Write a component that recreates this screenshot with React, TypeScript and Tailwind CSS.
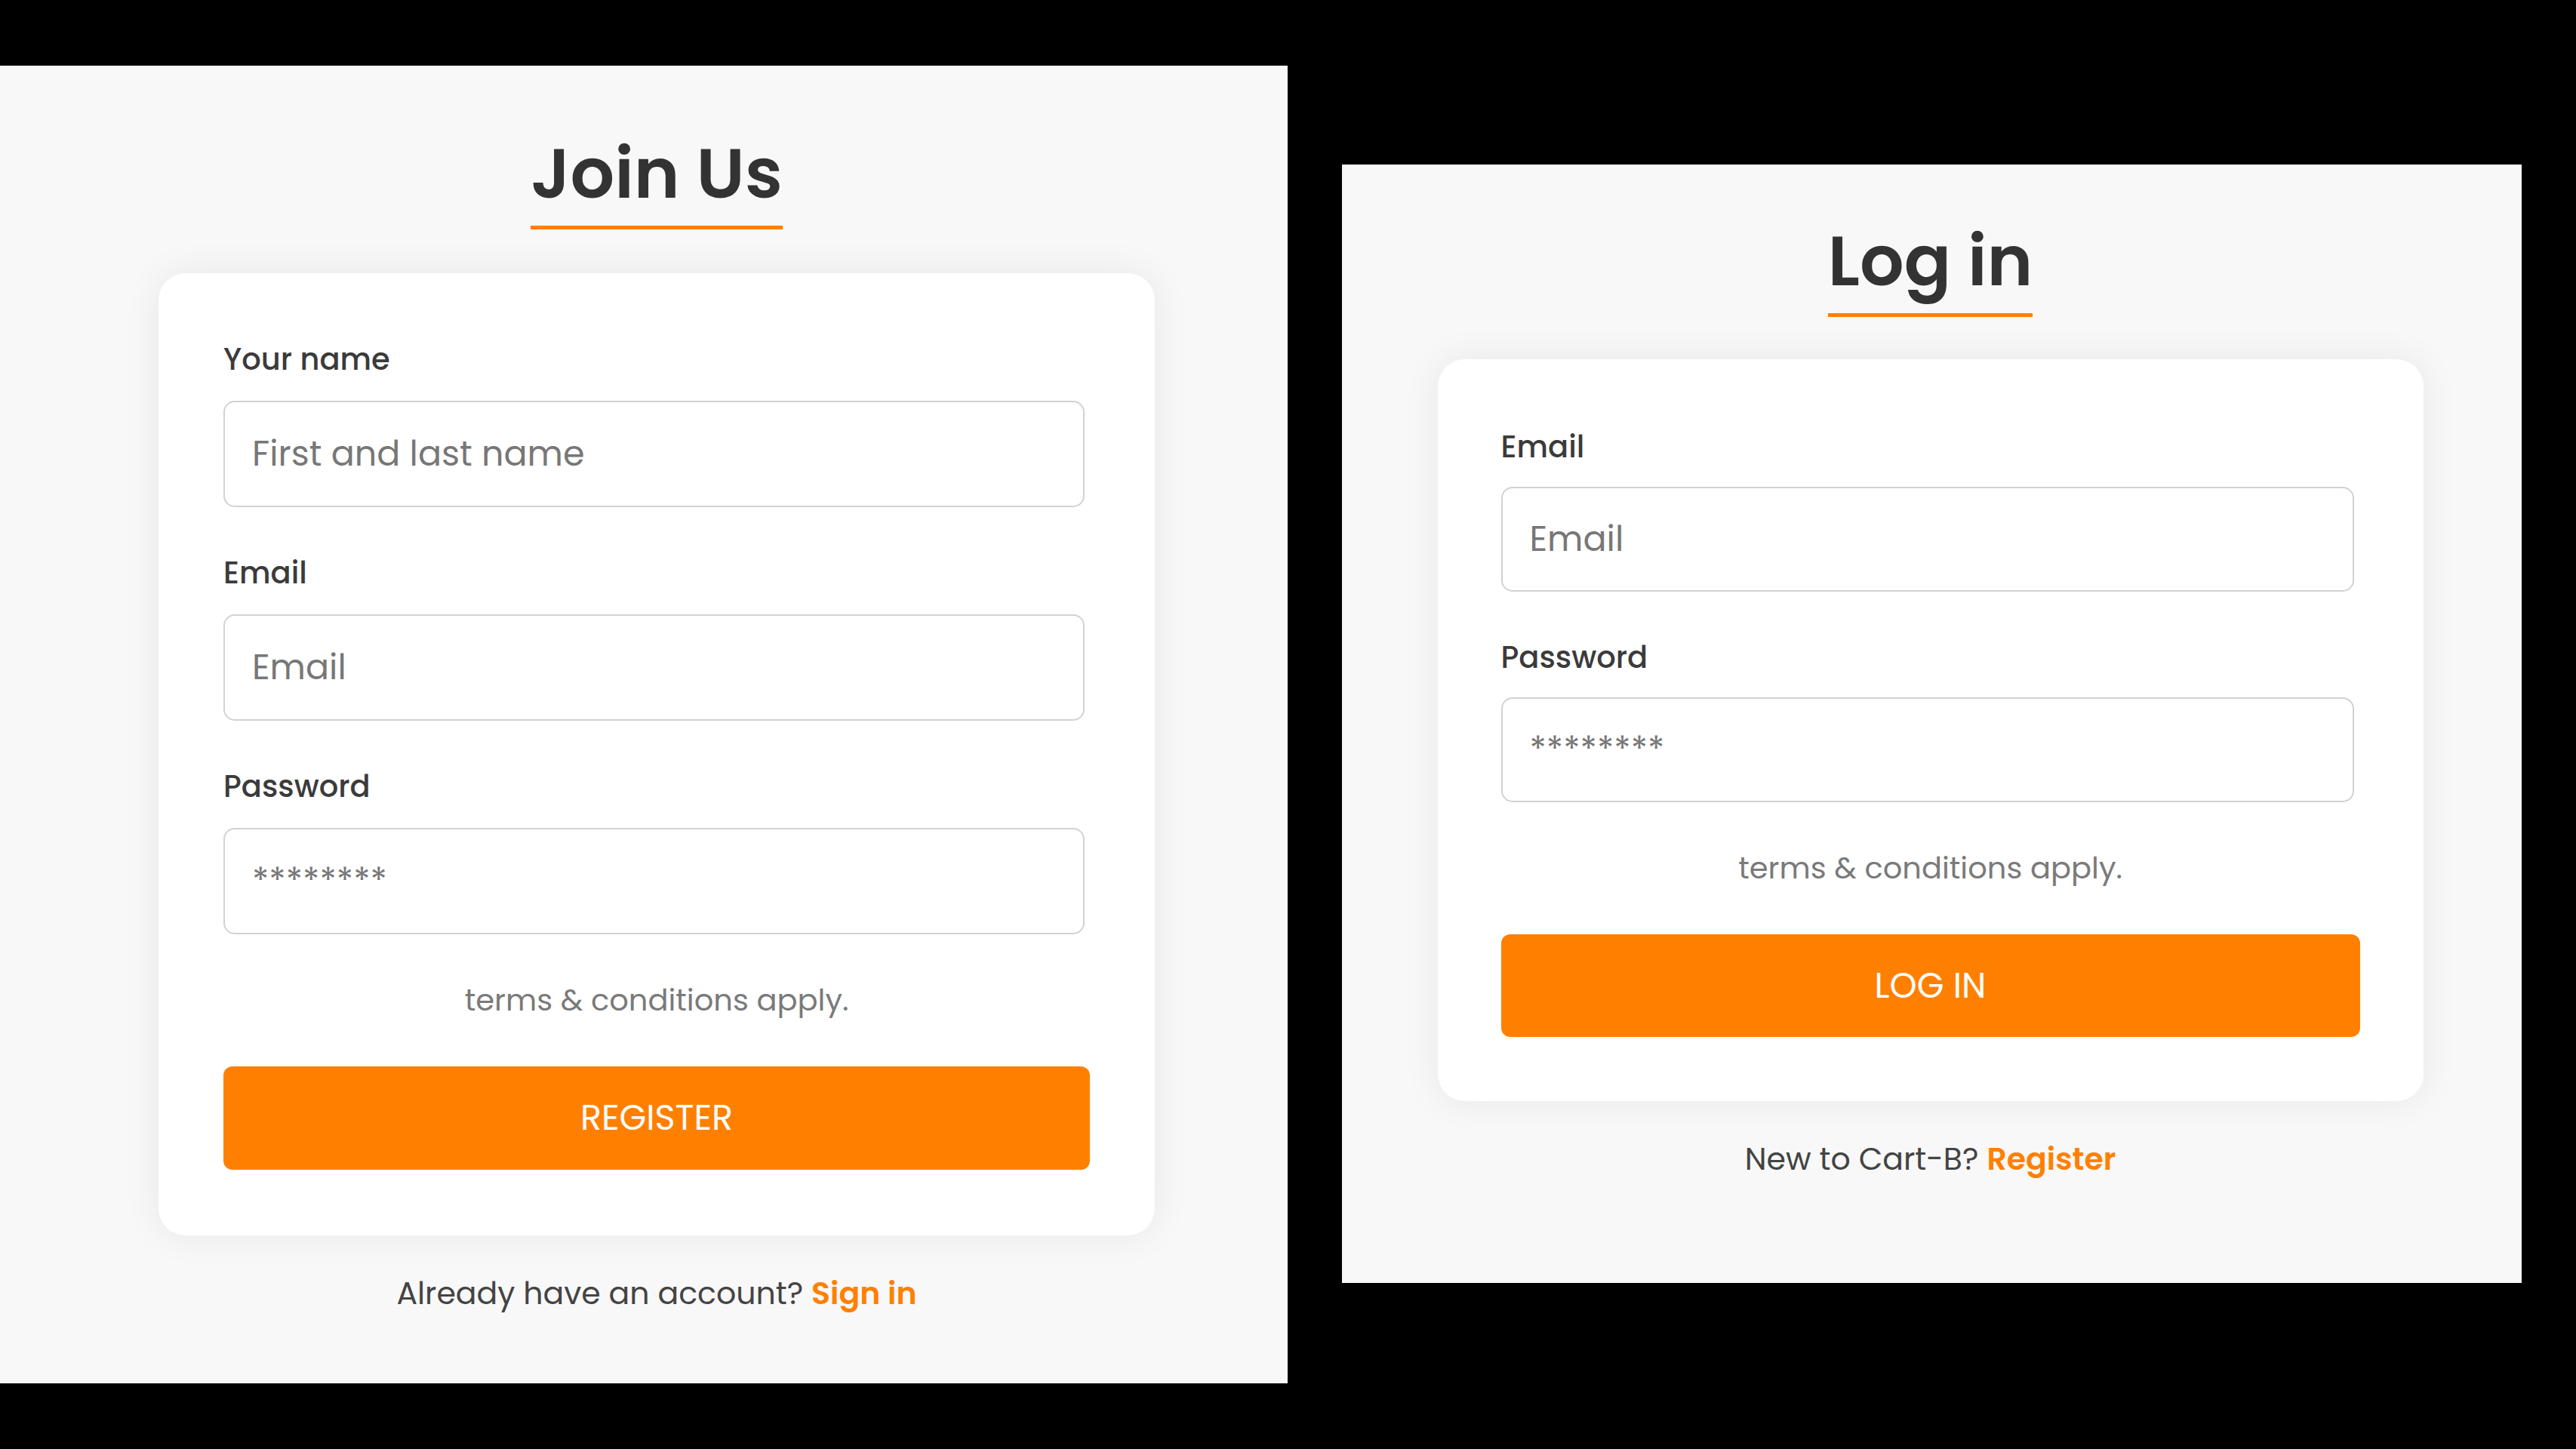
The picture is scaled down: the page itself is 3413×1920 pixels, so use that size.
type Field = { label: string; placeholder: string; type?: string };

type PanelProps = {
  title: string;
  fields: Field[];
  button: string;
  question: string;
  link: string;
  cardClass: string;
  inputClass: string;
  buttonClass: string;
};

function AuthPanel({ title, fields, button, question, link, cardClass, inputClass, buttonClass }: PanelProps) {
  return (
    <>
      <h1 className="inline-block border-b-[5px] border-[#ff8000] pb-[14px] text-[92px] leading-[110px] font-semibold text-[#333333]">
        {title}
      </h1>

      <div className={`rounded-[36px] bg-white shadow-[0_0_50px_rgba(0,0,0,0.07)] ${cardClass}`}>
        {fields.map((f) => (
          <div key={f.label} className="mb-[56px]">
            <label className="block text-[40px] leading-[62px] font-medium text-[#3b3b3b]">{f.label}</label>
            <input
              type={f.type ?? "text"}
              placeholder={f.placeholder}
              className={`rounded-[15px] border-2 border-[#d2d2d2] bg-white px-[36px] text-[46px] text-[#333] outline-none placeholder:text-[#777777] ${inputClass}`}
            />
          </div>
        ))}

        <p className="text-center text-[40px] leading-[62px] text-[#7a7a7a]">terms &amp; conditions apply.</p>

        <button className={`mt-[57px] w-full rounded-[12px] bg-[#ff8000] text-[46px] text-white ${buttonClass}`}>
          {button}
        </button>
      </div>

      <p className="mt-[46px] text-[41px] leading-[62px] text-[#444444]">
        {question} <a className="font-semibold text-[#ff8000]">{link}</a>
      </p>
    </>
  );
}

export default function App() {
  return (
    <div className="flex h-[1920px] w-[3413px] items-start overflow-hidden bg-black font-['Poppins','Inter',sans-serif]">
      {/* register */}
      <section className="mt-[87px] flex h-[1746px] w-[1706px] flex-col items-center bg-[#f8f8f8] pt-[88px] pl-[34px]">
        <AuthPanel
          title="Join Us"
          fields={[
            { label: "Your name", placeholder: "First and last name" },
            { label: "Email", placeholder: "Email", type: "email" },
            { label: "Password", placeholder: "********", type: "password" },
          ]}
          button="REGISTER"
          question="Already have an account?"
          link="Sign in"
          cardClass="mt-[58px] w-[1320px] px-[86px] pt-[83px] pb-[87px]"
          inputClass="mt-[24px] h-[141px] w-[1141px]"
          buttonClass="h-[137px]"
        />
      </section>

      {/* log in */}
      <section className="mt-[218px] ml-[72px] flex h-[1482px] w-[1563px] flex-col items-center bg-[#f8f8f8] pt-[73px] pr-[4px]">
        <AuthPanel
          title="Log in"
          fields={[
            { label: "Email", placeholder: "Email", type: "email" },
            { label: "Password", placeholder: "********", type: "password" },
          ]}
          button="LOG IN"
          question="New to Cart-B?"
          link="Register"
          cardClass="mt-[56px] w-[1306px] px-[84px] pt-[85px] pb-[85px]"
          inputClass="mt-[22px] h-[139px] w-[1130px]"
          buttonClass="h-[136px]"
        />
      </section>
    </div>
  );
}
